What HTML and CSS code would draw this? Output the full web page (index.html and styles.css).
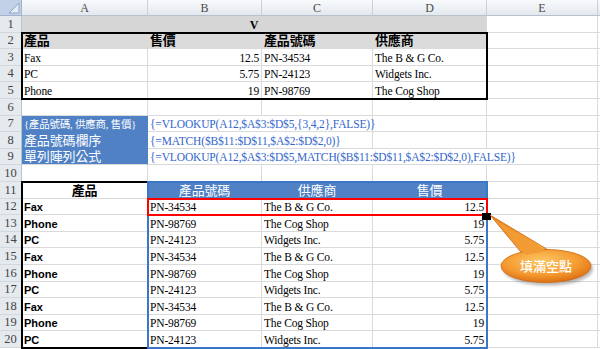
FILE: index.html
```html
<!DOCTYPE html>
<html lang="zh-Hant">
<head>
<meta charset="utf-8">
<title>VLOOKUP</title>
<link rel="stylesheet" href="styles.css">
</head>
<body>
<div class="sheet">
  <div class="corner"><svg class="corner-tri" width="22" height="16" viewBox="0 0 22 16"><polygon points="19,3 19,13 9,13" fill="#e6ecf4" stroke="#8fa6c6" stroke-width="1"/></svg></div>
  <div class="ch">A</div><div class="ch">B</div><div class="ch">C</div><div class="ch">D</div><div class="ch">E</div><div class="ch ch-edge"></div>

  <div class="rh">1</div>
  <div class="c title span4">V</div><div class="c"></div><div class="c edge"></div>

  <div class="rh">2</div>
  <div class="c hd">產品</div><div class="c hd">售價</div><div class="c hd">產品號碼</div><div class="c hd">供應商</div><div class="c"></div><div class="c edge"></div>

  <div class="rh">3</div>
  <div class="c">Fax</div><div class="c num">12.5</div><div class="c">PN-34534</div><div class="c">The B &amp; G Co.</div><div class="c"></div><div class="c edge"></div>

  <div class="rh">4</div>
  <div class="c">PC</div><div class="c num">5.75</div><div class="c">PN-24123</div><div class="c">Widgets Inc.</div><div class="c"></div><div class="c edge"></div>

  <div class="rh">5</div>
  <div class="c">Phone</div><div class="c num">19</div><div class="c">PN-98769</div><div class="c">The Cog Shop</div><div class="c"></div><div class="c edge"></div>

  <div class="rh">6</div>
  <div class="c"></div><div class="c"></div><div class="c"></div><div class="c"></div><div class="c"></div><div class="c edge"></div>

  <div class="rh">7</div>
  <div class="c blue lbl-s">{產品號碼, 供應商, 售價}</div><div class="c f span2">{=VLOOKUP(A12,$A$3:$D$5,{3,4,2},FALSE)}</div><div class="c"></div><div class="c"></div><div class="c edge"></div>

  <div class="rh">8</div>
  <div class="c blue lbl-l">產品號碼欄序</div><div class="c f span2">{=MATCH($B$11:$D$11,$A$2:$D$2,0)}</div><div class="c"></div><div class="c"></div><div class="c edge"></div>

  <div class="rh">9</div>
  <div class="c blue blue-last lbl-l">單列陣列公式</div><div class="c f span4">{=VLOOKUP(A12,$A$3:$D$5,MATCH($B$11:$D$11,$A$2:$D$2,0),FALSE)}</div><div class="c edge"></div>

  <div class="rh">10</div>
  <div class="c"></div><div class="c"></div><div class="c"></div><div class="c"></div><div class="c"></div><div class="c edge"></div>

  <div class="rh">11</div>
  <div class="c center hd2">產品</div><div class="c blue center hd3">產品號碼</div><div class="c blue center hd3">供應商</div><div class="c blue center hd3">售價</div><div class="c"></div><div class="c edge"></div>

  <div class="rh">12</div>
  <div class="c prod">Fax</div><div class="c">PN-34534</div><div class="c">The B &amp; G Co.</div><div class="c num">12.5</div><div class="c"></div><div class="c edge"></div>
  <div class="rh">13</div>
  <div class="c prod">Phone</div><div class="c">PN-98769</div><div class="c">The Cog Shop</div><div class="c num">19</div><div class="c"></div><div class="c edge"></div>
  <div class="rh">14</div>
  <div class="c prod">PC</div><div class="c">PN-24123</div><div class="c">Widgets Inc.</div><div class="c num">5.75</div><div class="c"></div><div class="c edge"></div>
  <div class="rh">15</div>
  <div class="c prod">Fax</div><div class="c">PN-34534</div><div class="c">The B &amp; G Co.</div><div class="c num">12.5</div><div class="c"></div><div class="c edge"></div>
  <div class="rh">16</div>
  <div class="c prod">Phone</div><div class="c">PN-98769</div><div class="c">The Cog Shop</div><div class="c num">19</div><div class="c"></div><div class="c edge"></div>
  <div class="rh">17</div>
  <div class="c prod">PC</div><div class="c">PN-24123</div><div class="c">Widgets Inc.</div><div class="c num">5.75</div><div class="c"></div><div class="c edge"></div>
  <div class="rh">18</div>
  <div class="c prod">Fax</div><div class="c">PN-34534</div><div class="c">The B &amp; G Co.</div><div class="c num">12.5</div><div class="c"></div><div class="c edge"></div>
  <div class="rh">19</div>
  <div class="c prod">Phone</div><div class="c">PN-98769</div><div class="c">The Cog Shop</div><div class="c num">19</div><div class="c"></div><div class="c edge"></div>
  <div class="rh">20</div>
  <div class="c prod">PC</div><div class="c">PN-24123</div><div class="c">Widgets Inc.</div><div class="c num">5.75</div><div class="c"></div><div class="c edge"></div>

  <div class="box box-a2"></div>
  <div class="box box-a11"></div>
  <div class="box box-b11"></div>
  <div class="box box-b12"></div>
  <div class="handle"></div>

  <svg class="callout" width="112" height="86" viewBox="0 0 112 86">
    <defs>
      <radialGradient id="og" cx="0.45" cy="0.35" r="0.7">
        <stop offset="0" stop-color="#fdc766"/>
        <stop offset="0.6" stop-color="#f49a30"/>
        <stop offset="1" stop-color="#d8680c"/>
      </radialGradient>
      <linearGradient id="tg" x1="0" y1="0" x2="1" y2="1">
        <stop offset="0" stop-color="#e9801c"/>
        <stop offset="1" stop-color="#f8ad45"/>
      </linearGradient>
      <filter id="sh" x="-20%" y="-20%" width="140%" height="160%">
        <feGaussianBlur stdDeviation="1.5"/>
      </filter>
    </defs>
    <ellipse cx="62" cy="64" rx="45" ry="16.5" fill="#000" opacity="0.28" filter="url(#sh)"/>
    <polygon points="4,10 39,52 64,46" fill="url(#tg)" stroke="#cf6a12" stroke-width="0.8"/>
    <ellipse cx="60" cy="61" rx="45" ry="16.5" fill="url(#og)" stroke="#cf6a12" stroke-width="0.8"/>
    <polygon points="8,14 40,50 60,46" fill="#f29a34"/>
    <text x="60" y="66" text-anchor="middle" class="callout-text">填滿空點</text>
  </svg>
</div>
</body>
</html>
```
FILE: styles.css
```css
* { box-sizing: border-box; }
html, body { margin: 0; padding: 0; background: #fff; }

.sheet {
  position: relative;
  display: grid;
  grid-template-columns: 22px 126px 114px 111px 114px 111px 2px;
  grid-template-rows: 16px repeat(20, 16.6px);
  width: 600px;
  height: 349px;
  overflow: hidden;
  background: #fff;
  font-family: "Liberation Serif", "Noto Sans CJK TC", serif;
  font-size: 11.5px;
  color: #000;
}

.corner {
  background: #c2d0e8;
  border-right: 1px solid #a3b3ca;
  border-bottom: 1px solid #a3b3ca;
}
.corner-tri { display: block; }

.ch {
  background: linear-gradient(#f8fafc, #e3e8ee);
  border-right: 1px solid #c9d0d8;
  border-bottom: 1px solid #b8c2cc;
  display: flex;
  align-items: center;
  justify-content: center;
  color: #4a4a4a;
  font-size: 12px;
  line-height: 14px;
}
.ch-edge { border-right: none; }

.rh {
  background: #e5eaef;
  border-right: 1px solid #b9c3cd;
  border-bottom: 1px solid #d2d8de;
  display: flex;
  align-items: flex-end;
  justify-content: center;
  color: #444;
  font-size: 12.5px;
  line-height: 15px;
}

.c {
  border-right: 1px solid #dadada;
  border-bottom: 1px solid #dadada;
  display: flex;
  align-items: flex-end;
  padding: 0 2px;
  white-space: nowrap;
  line-height: 13px;
  min-width: 0;
  letter-spacing: -0.15px;
}
.edge { border-right: none; }

.title {
  grid-column: span 4;
  background: #d6d6d6;
  justify-content: center;
  font-weight: bold;
  font-size: 12px;
}
.span2 { grid-column: span 2; }
.span4 { grid-column: span 4; }

.hd {
  background: #dbdbdb;
  font-weight: bold;
  font-size: 13px;
  line-height: 15px;
}
.num { justify-content: flex-end; }
.center { justify-content: center; }

.blue {
  background: #4f81c4;
  border-right-color: #4f81c4;
  border-bottom-color: #4f81c4;
  color: #fff;
}
.blue-last { border-bottom-color: #dadada; }
.lbl-s { font-size: 10.5px; letter-spacing: -0.2px; }
.lbl-l { font-size: 13px; line-height: 15px; }
.f { color: #3366cc; }

.hd2 { font-weight: bold; font-size: 13px; line-height: 15px; }
.hd3 { font-size: 13px; line-height: 15px; }

.prod {
  font-family: "Liberation Sans", sans-serif;
  font-weight: bold;
  font-size: 11px;
  letter-spacing: 0;
}

.box {
  position: absolute;
  inset: -1px;
  pointer-events: none;
}
.box-a2 { grid-row: 3 / 7; grid-column: 2 / 6; border: 2px solid #000; }
.box-a11 { grid-row: 12 / 22; grid-column: 2 / 3; border: 2px solid #000; }
.box-b11 { grid-row: 12 / 22; grid-column: 3 / 6; border: 2px solid #3a77c8; }
.box-b12 { grid-row: 13 / 14; grid-column: 3 / 6; border: 2px solid #f00; }

.handle {
  position: absolute;
  grid-row: 13 / 14;
  grid-column: 5 / 6;
  right: -4px;
  bottom: -5px;
  width: 9px;
  height: 7px;
  background: #000;
}

.callout {
  position: absolute;
  left: 486px;
  top: 205px;
  overflow: visible;
}
.callout-text {
  fill: #fff;
  font-family: "Noto Sans CJK TC", sans-serif;
  font-size: 13px;
  font-weight: 500;
}
```
